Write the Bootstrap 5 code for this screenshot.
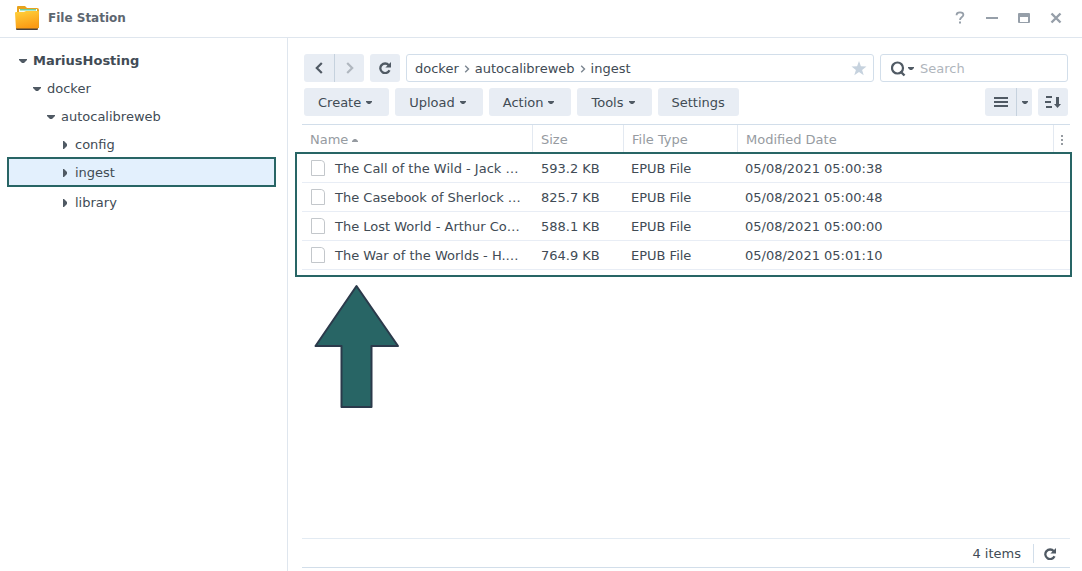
<!DOCTYPE html>
<html lang="en">
<head>
<meta charset="utf-8">
<meta name="viewport" content="width=device-width, initial-scale=1">
<title>File Station</title>
<link href="https://cdn.jsdelivr.net/npm/bootstrap@5.3.0/dist/css/bootstrap.min.css" rel="stylesheet">
<style>
  body { font-family: Verdana, "DejaVu Sans", sans-serif; font-size: 13px; line-height: 20px; color: #414b55; }
  a { color: inherit; text-decoration: none; }
  svg { display: block; flex: none; }
  .titlebar { height: 38px; border-bottom: 1px solid #dfe6ee; padding: 0 18px 2px 14px; }
  .app-title { font-size: 12px; line-height: 20px; color: #5d6670; }
  .win-btn { width: 16px; height: 20px; padding: 0; border: 0; background: none; color: #969fa9; }
  .sidebar { width: 288px; border-right: 1px solid #dfe6ee; padding: 8px 12px 0 8px; }
  .tree-row { height: 28px; padding: 2px 0 0 10px; gap: 5px; }
  .level-1 { padding-left: 24px; }
  .level-2 { padding-left: 38px; }
  .level-3 { padding-left: 52px; }
  .tree-row.selected { background: #e3f0fd; outline: 2px solid #286565; outline-offset: -1px; margin-bottom: 2px; }
  .pane { padding: 16px 12px 3px 14px; }
  .tools { padding: 0 2px; gap: 6px; }
  .tools + .tools { margin-top: 6px; }
  .tool { height: 28px; padding: 1px 14px 0; border: 0; border-radius: 3px; background: #e8edf4; color: #414b55; font-size: 13px; line-height: 20px; }
  .tool:hover { background: #dbe4ee; color: #414b55; }
  .tool-menu { display: flex; align-items: center; gap: 5px; padding-right: 17px; }
  .tool-icon { width: 30px; padding: 0; }
  .split { border-left: 1px solid #c6d2de; }
  .wide { width: 31px; }
  .drop { width: 16px; padding: 0; }
  .field { height: 28px; border: 1px solid #d2deea; border-radius: 3px; padding: 1px 6px 0 8px; }
  .search-field { width: 188px; padding-left: 10px; gap: 6px; }
  .search-field input { font-size: 13px; line-height: 20px; color: #414b55; outline: 0; min-width: 0; }
  .search-field input::placeholder { color: #afb5bc; opacity: 1; }
  .list-area { border-top: 1px solid #d2deea; margin-top: 8px; }
  .files { table-layout: fixed; border-collapse: separate; border-spacing: 0; font-size: 13px; line-height: 20px; }
  .files th { height: 29px; padding: 0 8px; font-weight: 400; color: #969ba1; border-right: 1px solid #e3e9f1; }
  .files th:last-child { border: 0; padding: 0; }
  .files td { height: 29px; padding: 1px 8px 0; color: #414b55; border-bottom: 1px solid #e8edf5; white-space: nowrap; }
  .files td:nth-child(3), .files td:nth-child(4) { padding-left: 7px; }
  .files td:first-child { padding-right: 0; }
  .files td span { gap: 9px; }
  .c-name { width: 231px; } .c-size { width: 91px; } .c-type { width: 114px; } .c-more { width: 16px; }
  .marker { position: absolute; top: 27px; bottom: -7px; left: -7px; right: -2px; border: 2px solid #286565; pointer-events: none; }
  .pointer { margin: 14px 0 0 12px; }
  .statusbar { height: 30px; border-top: 1px solid #e3ebf3; border-bottom: 1px solid #d2deea; padding: 1px 14px 0 0; }
  .status-sep { width: 1px; height: 19px; background: #d2deea; margin: 0 10px 0 12px; }
</style>
</head>
<body class="vh-100 d-flex flex-column overflow-hidden bg-white">
<svg width="0" height="0" class="position-absolute" aria-hidden="true">
  <symbol id="down" viewBox="0 0 8 4"><path d="M0 0h8v1L5 4H3L0 1z" fill="#505a64"/></symbol>
  <symbol id="caret" viewBox="0 0 6 3"><path d="M0 0h6v1L4 3H2L0 1z" fill="#505a64"/></symbol>
  <symbol id="right" viewBox="0 0 4 8"><path d="M0 0h1l3 3v2L1 8H0z" fill="#505a64"/></symbol>
  <symbol id="crumb" viewBox="0 0 5 8"><path d="M.7.8 4 4 .7 7.2" fill="none" stroke="#7b8590" stroke-width="1.4"/></symbol>
  <symbol id="reload" viewBox="0 0 12 12"><path d="M9.800 3.200A4.800 4.800 0 1 0 10.500 8.300" fill="none" stroke="#505a64" stroke-width="2.300"/><path d="M12 0v5.600H6.400z" fill="#505a64"/></symbol>
  <symbol id="page" viewBox="0 0 14 16"><path d="M.5.5h9.800q3.200.4 3.200 3.400v11.600H.5z" fill="#fff" stroke="#c3c7cb"/></symbol>
</svg>

<header class="titlebar d-flex align-items-center justify-content-between">
  <div class="d-flex align-items-center gap-2">
    <svg width="26" height="26" viewBox="0 0 26 26" aria-hidden="true">
      <defs>
        <linearGradient id="front" x2="0.3" y2="1"><stop stop-color="#ffd23c"/><stop offset="1" stop-color="#fb9b14"/></linearGradient>
      </defs>
      <path d="M3 4V2q0-1 1-1h7l2 2h10q2 0 2 2v18H3z" fill="#e8a21c"/>
      <path d="M5 4h18v5H5z" fill="#f4fbf5"/><path d="M6 4h16v1.500H6z" fill="#6ccf9b"/>
      <path d="M1 8q0-1 1-1h8l2-1h12q1 0 1 1l-1 17H2z" fill="url(#front)"/>
      <path d="M2 23.500h22v.5q0 1-1 1H3q-1 0-1-1z" fill="#4a4038"/>
    </svg>
    <h1 class="app-title fw-bold m-0">File Station</h1>
  </div>
  <div class="d-flex gap-3">
    <button class="win-btn d-flex align-items-center justify-content-center" aria-label="Help"><svg width="10" height="13" viewBox="0 0 10 13"><path d="M1.600 4.200V3.800C1.600 2.200 3 1.300 5 1.300s3.400 1 3.400 2.500C8.400 6 5 6 5 9" fill="none" stroke="currentColor" stroke-width="1.800"/><path d="M4 10.500h2v2H4z" fill="currentColor"/></svg></button>
    <button class="win-btn d-flex align-items-center justify-content-center" aria-label="Minimize"><svg width="12" height="2" viewBox="0 0 12 2"><path d="M0 0h12v2H0z" fill="currentColor"/></svg></button>
    <button class="win-btn d-flex align-items-center justify-content-center" aria-label="Maximize"><svg width="12" height="10" viewBox="0 0 12 10"><path d="M1 0h10q1 0 1 1v8q0 1-1 1H1q-1 0-1-1V1q0-1 1-1zm1 4v5h8V4z" fill="currentColor" fill-rule="evenodd"/></svg></button>
    <button class="win-btn d-flex align-items-center justify-content-center" aria-label="Close"><svg width="12" height="12" viewBox="0 0 12 12"><path d="m1.500 1.500 9 9m0-9-9 9" stroke="currentColor" stroke-width="2.400"/></svg></button>
  </div>
</header>

<div class="d-flex flex-fill">
  <nav class="sidebar flex-shrink-0" aria-label="Folders">
    <a href="#" class="tree-row d-flex align-items-center fw-bold"><svg width="10" height="4"><use href="#down"/></svg>MariusHosting</a>
    <a href="#" class="tree-row level-1 d-flex align-items-center"><svg width="10" height="4"><use href="#down"/></svg>docker</a>
    <a href="#" class="tree-row level-2 d-flex align-items-center"><svg width="10" height="4"><use href="#down"/></svg>autocalibreweb</a>
    <a href="#" class="tree-row level-3 d-flex align-items-center"><svg width="10" height="8"><use href="#right"/></svg>config</a>
    <a href="#" class="tree-row level-3 selected d-flex align-items-center" aria-current="true"><svg width="10" height="8"><use href="#right"/></svg>ingest</a>
    <a href="#" class="tree-row level-3 d-flex align-items-center"><svg width="10" height="8"><use href="#right"/></svg>library</a>
  </nav>

  <main class="pane d-flex flex-column flex-fill">
    <div class="tools d-flex">
      <div class="btn-group">
        <button class="btn tool tool-icon d-flex align-items-center justify-content-center" aria-label="Back"><svg width="8" height="12" viewBox="0 0 8 12"><path d="M6.800 1 1.800 6l5 5" fill="none" stroke="#505a64" stroke-width="2.200"/></svg></button>
        <button class="btn tool tool-icon split ms-0 d-flex align-items-center justify-content-center" aria-label="Forward"><svg width="8" height="12" viewBox="0 0 8 12"><path d="m1.200 1 5 5-5 5" fill="none" stroke="#b0b7bf" stroke-width="2.200"/></svg></button>
      </div>
      <button class="btn tool tool-icon d-flex align-items-center justify-content-center" aria-label="Refresh"><svg width="12" height="12"><use href="#reload"/></svg></button>
      <div class="field d-flex align-items-center flex-fill">
        <nav class="d-flex align-items-center flex-fill" aria-label="Path">
          <a href="#">docker</a><svg class="mx-1" width="8" height="8"><use href="#crumb"/></svg>
          <a href="#">autocalibreweb</a><svg class="mx-1" width="8" height="8"><use href="#crumb"/></svg>
          <a href="#">ingest</a>
        </nav>
        <button class="win-btn d-flex align-items-center" aria-label="Add to favorites"><svg width="16" height="15" viewBox="0 0 16 15"><path d="m8 0 1.900 5.300 5.600.1-4.400 3.500 1.600 5.400L8 11.100l-4.700 3.200 1.600-5.400L.5 5.400l5.600-.1z" fill="#c6d2de"/></svg></button>
      </div>
      <div class="field search-field d-flex align-items-center">
        <svg width="23" height="16" viewBox="0 0 23 16" aria-hidden="true"><circle cx="6.500" cy="7" r="5.500" fill="none" stroke="#505a64" stroke-width="2.200"/><path d="m9.500 10.500 4 4" stroke="#505a64" stroke-width="2.400"/><path d="M17 6h6v1l-2 2h-2l-2-2z" fill="#505a64"/></svg>
        <input type="text" class="border-0 bg-transparent flex-fill p-0" placeholder="Search" aria-label="Search">
      </div>
    </div>

    <div class="tools d-flex">
      <button class="btn tool tool-menu">Create<svg width="6" height="3"><use href="#caret"/></svg></button>
      <button class="btn tool tool-menu">Upload<svg width="6" height="3"><use href="#caret"/></svg></button>
      <button class="btn tool tool-menu">Action<svg width="6" height="3"><use href="#caret"/></svg></button>
      <button class="btn tool tool-menu">Tools<svg width="6" height="3"><use href="#caret"/></svg></button>
      <button class="btn tool">Settings</button>
      <div class="btn-group ms-auto">
        <button class="btn tool tool-icon wide d-flex align-items-center justify-content-center" aria-label="List view"><svg width="14" height="10" viewBox="0 0 14 10"><path d="M0 0h14v2H0zm0 4h14v2H0zm0 4h14v2H0z" fill="#505a64"/></svg></button>
        <button class="btn tool drop split ms-0 d-flex align-items-center justify-content-center" aria-label="View options"><svg width="6" height="3"><use href="#caret"/></svg></button>
      </div>
      <button class="btn tool tool-icon d-flex align-items-center justify-content-center" aria-label="Sort"><svg width="16" height="12" viewBox="0 0 16 12"><path d="M1 0h6v2H1zM0 5h6v2H0zm1 5h6v2H1zM11 1h3v7h2l-3.500 4L9 8h2z" fill="#505a64"/></svg></button>
    </div>

    <div class="list-area flex-fill">
      <div class="position-relative">
        <table class="files w-100">
          <colgroup><col class="c-name"><col class="c-size"><col class="c-type"><col><col class="c-more"></colgroup>
          <thead><tr>
            <th scope="col"><span class="d-flex align-items-center gap-1">Name<svg width="6" height="4" viewBox="0 0 6 4"><path d="M0 4V3l2-2h2l2 2v1z" fill="#969ba1"/></svg></span></th>
            <th scope="col">Size</th><th scope="col">File Type</th><th scope="col">Modified Date</th>
            <th scope="col" aria-label="Columns"><svg class="mx-auto" width="2" height="10" viewBox="0 0 2 10"><path d="M0 0h2v2H0zm0 4h2v2H0zm0 4h2v2H0z" fill="#969ba1"/></svg></th>
          </tr></thead>
          <tbody>
            <tr><td><span class="d-flex align-items-center"><svg width="16" height="18" viewBox="0 0 16 18"><use href="#page" x="1" width="14" height="16"/></svg>The Call of the Wild - Jack …</span></td><td>593.2 KB</td><td>EPUB File</td><td>05/08/2021 05:00:38</td><td></td></tr>
            <tr><td><span class="d-flex align-items-center"><svg width="16" height="18" viewBox="0 0 16 18"><use href="#page" x="1" width="14" height="16"/></svg>The Casebook of Sherlock …</span></td><td>825.7 KB</td><td>EPUB File</td><td>05/08/2021 05:00:48</td><td></td></tr>
            <tr><td><span class="d-flex align-items-center"><svg width="16" height="18" viewBox="0 0 16 18"><use href="#page" x="1" width="14" height="16"/></svg>The Lost World - Arthur Co…</span></td><td>588.1 KB</td><td>EPUB File</td><td>05/08/2021 05:00:00</td><td></td></tr>
            <tr><td><span class="d-flex align-items-center"><svg width="16" height="18" viewBox="0 0 16 18"><use href="#page" x="1" width="14" height="16"/></svg>The War of the Worlds - H.…</span></td><td>764.9 KB</td><td>EPUB File</td><td>05/08/2021 05:01:10</td><td></td></tr>
          </tbody>
        </table>
        <div class="marker"></div>
      </div>
      <svg class="pointer" width="86" height="124" viewBox="0 0 86 124" aria-hidden="true"><path d="M42.500 2 84 62H57.500v61h-30V62H1.500z" fill="#286565" stroke="#2b3a4b" stroke-width="2" stroke-linejoin="round"/></svg>
    </div>

    <footer class="statusbar d-flex align-items-center justify-content-end">
      <span>4 items</span><span class="status-sep"></span>
      <button class="win-btn d-flex align-items-center w-auto" aria-label="Refresh list"><svg width="12" height="12"><use href="#reload"/></svg></button>
    </footer>
  </main>
</div>
<script src="https://cdn.jsdelivr.net/npm/bootstrap@5.3.0/dist/js/bootstrap.bundle.min.js"></script>
</body>
</html>
